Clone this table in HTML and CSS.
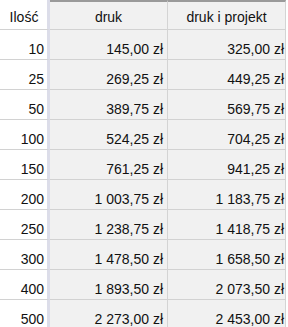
FILE: index.html
```html
<!DOCTYPE html>
<html lang="pl">
<head>
<meta charset="utf-8">
<link rel="stylesheet" href="styles.css">
</head>
<body>
<div class="price-table">
  <div class="cell qty head">Ilość</div>
  <div class="cell val head">druk</div>
  <div class="cell val last head">druk i projekt</div>

  <div class="cell qty">10</div><div class="cell val">145,00 zł</div><div class="cell val last">325,00 zł</div>
  <div class="cell qty">25</div><div class="cell val">269,25 zł</div><div class="cell val last">449,25 zł</div>
  <div class="cell qty">50</div><div class="cell val">389,75 zł</div><div class="cell val last">569,75 zł</div>
  <div class="cell qty">100</div><div class="cell val">524,25 zł</div><div class="cell val last">704,25 zł</div>
  <div class="cell qty">150</div><div class="cell val">761,25 zł</div><div class="cell val last">941,25 zł</div>
  <div class="cell qty">200</div><div class="cell val">1 003,75 zł</div><div class="cell val last">1 183,75 zł</div>
  <div class="cell qty">250</div><div class="cell val">1 238,75 zł</div><div class="cell val last">1 418,75 zł</div>
  <div class="cell qty">300</div><div class="cell val">1 478,50 zł</div><div class="cell val last">1 658,50 zł</div>
  <div class="cell qty">400</div><div class="cell val">1 893,50 zł</div><div class="cell val last">2 073,50 zł</div>
  <div class="cell qty">500</div><div class="cell val">2 273,00 zł</div><div class="cell val last">2 453,00 zł</div>
</div>
</body>
</html>
```

FILE: styles.css
```css
* { box-sizing: border-box; }
html, body { margin: 0; padding: 0; background: #fff; }
body {
  font-family: "Liberation Sans", Arial, Helvetica, sans-serif;
  font-size: 14px;
  color: #111;
  line-height: 16px;
}
.price-table {
  display: grid;
  grid-template-columns: 50px 118px 118px;
  grid-auto-rows: 30px;
  width: 286px;
}
.cell {
  border-bottom: 1px solid #d2d2d2;
  padding: 11px 4px 0 4px;
  text-align: right;
  white-space: nowrap;
}
.qty {
  background: #fff;
  border-right: 3px solid #dcdde9;
  padding-right: 3px;
}
.val {
  background: #f1f1f1;
  border-right: 1px solid #d4d4d4;
}
.val.last {
  padding-right: 1px;
}
.head {
  text-align: center;
  padding-top: 9px;
}
.val.head {
  border-top: 2px solid #9a9a9a;
  padding-top: 7px;
}
.val.last.head {
  padding-right: 4px;
}
```
